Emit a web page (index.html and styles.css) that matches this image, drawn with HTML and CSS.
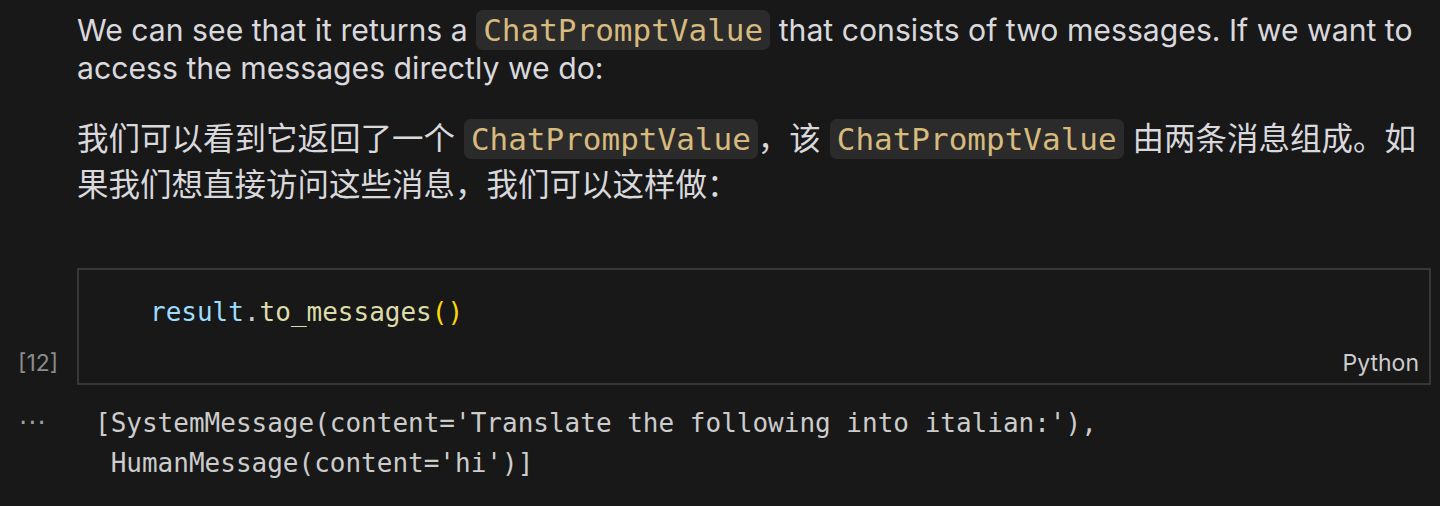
FILE: index.html
```html
<!DOCTYPE html>
<html>
<head>
<meta charset="utf-8">
<link rel="stylesheet" href="styles.css">
</head>
<body>
<div class="notebook">
  <div class="md-cell">
    <p class="para en">We can see that it returns a <code class="inline">ChatPromptValue</code> that consists of two messages. If we want to access the messages directly we do:</p>
    <p class="para zh">我们可以看到它返回了一个 <code class="inline">ChatPromptValue</code>，该 <code class="inline">ChatPromptValue</code> 由两条消息组成。如果我们想直接访问这些消息，我们可以这样做：</p>
  </div>
  <div class="code-cell">
    <div class="gutter"><span class="exec">[12]</span></div>
    <div class="editor">
      <pre class="code"><span class="var">result</span><span class="punc">.</span><span class="fn">to_messages</span><span class="br">()</span></pre>
      <div class="lang">Python</div>
    </div>
  </div>
  <div class="output-cell">
    <div class="gutter out"><span class="dots">···</span></div>
    <pre class="output">[SystemMessage(content='Translate the following into italian:'),
 HumanMessage(content='hi')]</pre>
  </div>
</div>
</body>
</html>
```
FILE: styles.css
```css
html, body {
  margin: 0;
  padding: 0;
  background: #181818;
}
body {
  width: 1440px;
  height: 506px;
  overflow: hidden;
}
.notebook {
  display: flex;
  flex-direction: column;
}
.md-cell {
  padding: 8px 20px 0 77px;
}
.para {
  margin: 0;
  color: #d8d8dd;
  font-family: Inter, "Noto Sans CJK SC", sans-serif;
  font-size: 30.2px;
}
.para.en {
  line-height: 38px;
  padding-top: 3px;
}
.para.zh {
  margin-top: 29px;
  font-size: 31.5px;
  line-height: 45px;
}
.inline {
  font-family: "DejaVu Sans Mono", monospace;
  font-size: 31px;
  color: #d7ba7d;
  background: #2b2b2b;
  border-radius: 7px;
  padding: 2px 7px;
}
.code-cell {
  display: flex;
  margin-top: 61px;
  height: 117px;
}
.gutter {
  width: 77px;
  display: flex;
  align-items: flex-end;
  justify-content: flex-start;
  flex: none;
}
.exec {
  font-family: Inter, sans-serif;
  font-size: 23px;
  color: #8b8b8b;
  padding: 0 0 8px 18px;
}
.editor {
  flex: 1;
  margin-right: 9px;
  border: 2px solid #373737;
  display: flex;
  flex-direction: column;
  justify-content: space-between;
}
.code {
  margin: 0;
  padding: 24px 0 0 71px;
  font-family: "DejaVu Sans Mono", monospace;
  font-size: 26px;
  line-height: 36px;
}
.var { color: #9cdcfe; }
.punc { color: #cccccc; }
.fn { color: #dcdcaa; }
.br { color: #ffd700; }
.lang {
  align-self: flex-end;
  padding: 0 10px 6px 0;
  font-family: Inter, sans-serif;
  font-size: 23px;
  color: #cccccc;
}
.output-cell {
  display: flex;
  margin-top: 18px;
}
.gutter.out {
  align-items: flex-start;
  width: 95px;
}
.dots {
  font-family: "DejaVu Sans", sans-serif;
  font-size: 26px;
  letter-spacing: 1px;
  color: #a0a0a0;
  padding-left: 19px;
  line-height: 40px;
}
.output {
  margin: 0;
  font-family: "DejaVu Sans Mono", monospace;
  font-size: 26px;
  line-height: 40px;
  color: #cccccc;
}
```
